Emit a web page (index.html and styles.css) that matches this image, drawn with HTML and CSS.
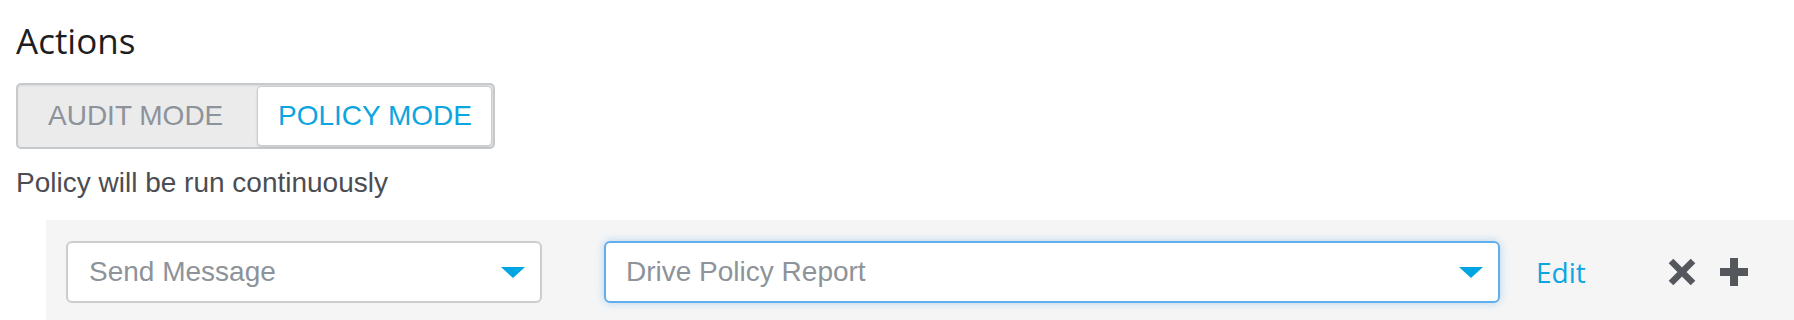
FILE: index.html
```html
<!DOCTYPE html>
<html>
<head>
    <title>Actions</title>
    <link rel="stylesheet" href="styles.css">
</head>
<body>
    <div class="container">
        <h1>Actions</h1>
        <div class="mode-toggle">
            <button class="mode-btn">AUDIT MODE</button>
            <button class="mode-btn active">POLICY MODE</button>
        </div>
        <p class="mode-note">Policy will be run continuously</p>

        <div class="action-row">
            <div class="select select-action">
                <span class="select-text">Send Message</span>
                <span class="caret"></span>
            </div>
            <div class="select select-report focused">
                <span class="select-text">Drive Policy Report</span>
                <span class="caret"></span>
            </div>
            <a class="edit-link" href="#">Edit</a>
            <button class="icon-btn remove-btn" title="Remove">
                <svg width="28" height="28" viewBox="0 0 28 28">
                    <path d="M3 3 L25 25 M25 3 L3 25" stroke="#54585d" stroke-width="6.5" fill="none"/>
                </svg>
            </button>
            <button class="icon-btn add-btn" title="Add">
                <svg width="28" height="28" viewBox="0 0 28 28">
                    <rect x="0" y="10" width="28" height="8" fill="#54585d"/>
                    <rect x="10" y="0" width="8" height="28" fill="#54585d"/>
                </svg>
            </button>
        </div>
    </div>
</body>
</html>
```

FILE: styles.css
```css
* {
    margin: 0;
    padding: 0;
    box-sizing: border-box;
}

body {
    background: #fff;
    font-family: 'Liberation Sans', Arial, sans-serif;
    overflow: hidden;
}

.container {
    padding: 19px 0 0 16px;
}

h1 {
    font-family: 'Open Sans', sans-serif;
    font-weight: 400;
    font-size: 35px;
    line-height: 44px;
    color: #1d1e22;
}

.mode-toggle {
    display: inline-flex;
    margin-top: 20px;
    height: 66px;
    border: 2px solid #c6cacd;
    border-radius: 5px;
    background: #ebebeb;
    box-shadow: inset 0 1px 2px rgba(0, 0, 0, 0.08);
}

.mode-btn {
    font-family: 'Liberation Sans', Arial, sans-serif;
    font-size: 28px;
    background: none;
    border: none;
    color: #8c939a;
    cursor: pointer;
}

.mode-btn:first-child {
    width: 238px;
    padding-left: 30px;
    text-align: left;
}

.mode-btn.active {
    margin: 1px;
    padding: 0 19px 0 20px;
    background: #fff;
    border: 1px solid #c9ccd0;
    border-radius: 4px;
    box-shadow: 0 1px 2px rgba(0, 0, 0, 0.15);
    color: #0ba5df;
}

.mode-note {
    margin-top: 18px;
    font-size: 28px;
    line-height: 32px;
    color: #4b4d52;
}

.action-row {
    display: flex;
    align-items: center;
    margin-top: 21px;
    margin-left: 30px;
    padding: 21px 20px;
    background: #f5f5f5;
}

.select {
    display: flex;
    align-items: center;
    justify-content: space-between;
    height: 62px;
    padding: 0 15px 0 21px;
    background: #fff;
    border: 2px solid #cdcdcd;
    border-radius: 6px;
}

.select-action {
    width: 476px;
}

.select-report {
    width: 896px;
    margin-left: 62px;
    padding-left: 20px;
}

.select.focused {
    border-color: #63aeea;
    box-shadow: 0 0 9px rgba(99, 174, 234, 0.45);
}

.select-text {
    font-size: 28px;
    line-height: 32px;
    color: #8d9399;
}

.caret {
    width: 0;
    height: 0;
    border-left: 12px solid transparent;
    border-right: 12px solid transparent;
    border-top: 11px solid #00a5e2;
}

.edit-link {
    margin-left: 36px;
    font-family: 'Open Sans', sans-serif;
    font-size: 28px;
    line-height: 32px;
    color: #0ba5df;
    text-decoration: none;
}

.icon-btn {
    display: flex;
    background: none;
    border: none;
    cursor: pointer;
}

.remove-btn {
    margin-left: 82px;
}

.add-btn {
    margin-left: 24px;
}
```
